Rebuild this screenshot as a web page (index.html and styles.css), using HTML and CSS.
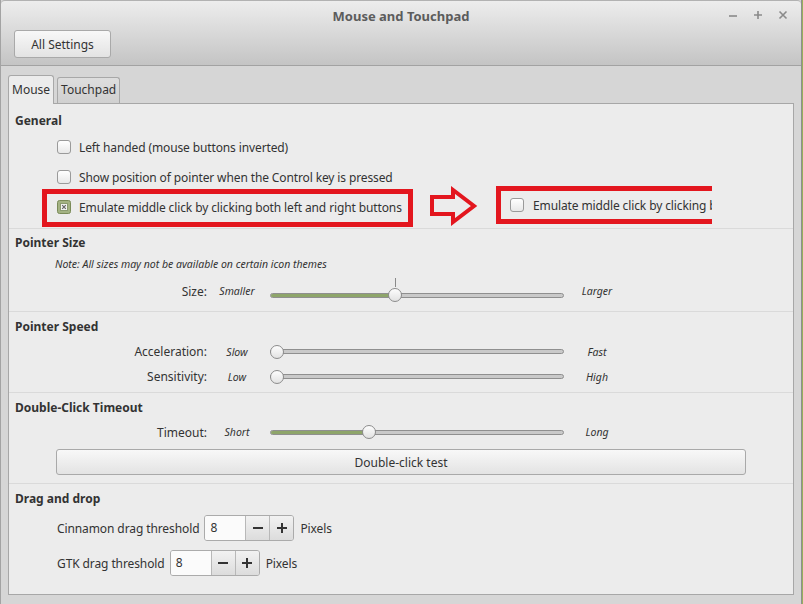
FILE: index.html
```html
<!DOCTYPE html>
<html>
<head>
    <title>Mouse and Touchpad</title>
    <link rel="stylesheet" href="styles.css">
</head>
<body>
    <div class="window">
        <!-- Header bar -->
        <div class="headerbar">
            <div class="titlebar">
                <span></span>
                <span class="title">Mouse and Touchpad</span>
                <div class="wm-buttons">
                    <svg width="10" height="10" viewBox="0 0 10 10"><path d="M1 6h8" stroke="#8a8a8a" stroke-width="1.6"/></svg>
                    <svg width="10" height="10" viewBox="0 0 10 10"><path d="M1 5h8M5 1v8" stroke="#8a8a8a" stroke-width="1.6"/></svg>
                    <svg width="10" height="10" viewBox="0 0 10 10"><path d="M1.5 1.5l7 7M8.5 1.5l-7 7" stroke="#8a8a8a" stroke-width="1.6"/></svg>
                </div>
            </div>
            <div class="toolbar">
                <button class="gtk-button all-settings">All Settings</button>
            </div>
        </div>

        <div class="content">
            <div class="tabs">
                <div class="tab active">Mouse</div>
                <div class="tab">Touchpad</div>
            </div>

            <div class="notebook">
                <!-- General -->
                <div class="group general">
                    <div class="group-title">General</div>
                    <div class="check-row"><span class="checkbox"></span>Left handed (mouse buttons inverted)</div>
                    <div class="check-row"><span class="checkbox"></span>Show position of pointer when the Control key is pressed</div>
                    <div class="check-row">
                        <svg class="checkbox-checked" width="14" height="14" viewBox="0 0 14 14">
                            <rect x="0.5" y="0.5" width="13" height="13" rx="2" fill="#a3b283" stroke="#7a8a58"/>
                            <rect x="3.5" y="3.5" width="7" height="7" fill="#f3f3f3" stroke="#8b9a70"/>
                            <path d="M5.2 5.2l3.6 3.6M8.8 5.2l-3.6 3.6" stroke="#666" stroke-width="1.2"/>
                        </svg>Emulate middle click by clicking both left and right buttons
                    </div>

                    <!-- annotations -->
                    <div class="mark-box"></div>
                    <svg class="mark-arrow" width="50" height="40" viewBox="0 0 50 40">
                        <polygon points="3,11 24,11 24,4 45,20 24,36 24,28 3,28" fill="#ececec" stroke="#e3161e" stroke-width="4"/>
                    </svg>
                    <div class="mark-crop">
                        <span class="checkbox"></span>Emulate middle click by clicking both left and right buttons
                    </div>
                </div>

                <!-- Pointer size -->
                <div class="group pointer-size">
                    <div class="group-title">Pointer Size</div>
                    <div class="note">Note: All sizes may not be available on certain icon themes</div>
                    <div class="slider-row size-row">
                        <span class="slider-label">Size:</span>
                        <span class="range-min">Smaller</span>
                        <div class="slider marked">
                            <div class="track-wrap">
                                <div class="track"><div class="fill" style="width: 125px"></div></div>
                                <div class="tick" style="left: 125px"></div>
                                <div class="knob" style="left: 118px"></div>
                            </div>
                        </div>
                        <span class="range-max">Larger</span>
                    </div>
                </div>

                <!-- Pointer speed -->
                <div class="group pointer-speed">
                    <div class="group-title">Pointer Speed</div>
                    <div class="slider-row speed-row">
                        <span class="slider-label">Acceleration:</span>
                        <span class="range-min">Slow</span>
                        <div class="slider">
                            <div class="track-wrap">
                                <div class="track"></div>
                                <div class="knob" style="left: 0px"></div>
                            </div>
                        </div>
                        <span class="range-max">Fast</span>
                    </div>
                    <div class="slider-row speed-row">
                        <span class="slider-label">Sensitivity:</span>
                        <span class="range-min">Low</span>
                        <div class="slider">
                            <div class="track-wrap">
                                <div class="track"></div>
                                <div class="knob" style="left: 0px"></div>
                            </div>
                        </div>
                        <span class="range-max">High</span>
                    </div>
                </div>

                <!-- Double click -->
                <div class="group double-click">
                    <div class="group-title">Double-Click Timeout</div>
                    <div class="slider-row timeout-row">
                        <span class="slider-label">Timeout:</span>
                        <span class="range-min">Short</span>
                        <div class="slider">
                            <div class="track-wrap">
                                <div class="track"><div class="fill" style="width: 99px"></div></div>
                                <div class="knob" style="left: 92px"></div>
                            </div>
                        </div>
                        <span class="range-max">Long</span>
                    </div>
                    <button class="gtk-button test-button">Double-click test</button>
                </div>

                <!-- Drag and drop -->
                <div class="group drag-drop">
                    <div class="group-title">Drag and drop</div>
                    <div class="spin-row">
                        <span>Cinnamon drag threshold</span>
                        <div class="spin">
                            <span class="spin-entry">8</span>
                            <span class="spin-btn"><svg width="10" height="10" viewBox="0 0 10 10"><path d="M0 5h10" stroke="#333" stroke-width="2"/></svg></span>
                            <span class="spin-btn"><svg width="10" height="10" viewBox="0 0 10 10"><path d="M0 5h10M5 0v10" stroke="#333" stroke-width="2"/></svg></span>
                        </div>
                        <span>Pixels</span>
                    </div>
                    <div class="spin-row second">
                        <span>GTK drag threshold</span>
                        <div class="spin">
                            <span class="spin-entry">8</span>
                            <span class="spin-btn"><svg width="10" height="10" viewBox="0 0 10 10"><path d="M0 5h10" stroke="#333" stroke-width="2"/></svg></span>
                            <span class="spin-btn"><svg width="10" height="10" viewBox="0 0 10 10"><path d="M0 5h10M5 0v10" stroke="#333" stroke-width="2"/></svg></span>
                        </div>
                        <span>Pixels</span>
                    </div>
                </div>
            </div>
        </div>
    </div>
</body>
</html>
```

FILE: styles.css
```css
* {
    box-sizing: border-box;
}
html, body {
    margin: 0;
    padding: 0;
}
body {
    width: 803px;
    height: 604px;
    overflow: hidden;
    background: #98b05c;
    font-family: "Noto Sans", "DejaVu Sans", sans-serif;
    font-size: 12px;
    color: #333;
}
.window {
    width: 802px;
    height: 604px;
    background: #d6d6d6;
    border-left: 1px solid #a3a3a3;
    border-right: 1px solid #8e8e8e;
    display: flex;
    flex-direction: column;
}

/* Header bar */
.headerbar {
    height: 66px;
    background: linear-gradient(#ededed, #c4c4c4);
    border-top: 1px solid #b2b2b2;
    border-bottom: 1px solid #a2a2a2;
    border-radius: 4px 4px 0 0;
}
.titlebar {
    height: 29px;
    display: grid;
    grid-template-columns: 1fr auto 1fr;
    align-items: center;
}
.title {
    font-size: 13px;
    font-weight: bold;
    color: #5c5c5c;
}
.wm-buttons {
    justify-self: end;
    display: flex;
    gap: 15px;
    padding-right: 13px;
    padding-bottom: 2px;
}
.wm-buttons svg {
    display: block;
}
.toolbar {
    padding-left: 13px;
}
.gtk-button {
    font-family: inherit;
    font-size: 12px;
    color: #333;
    background: linear-gradient(#f8f8f8, #e3e3e3);
    border: 1px solid #a9a9a9;
    border-radius: 3px;
    padding: 0;
}
.all-settings {
    width: 97px;
    height: 28px;
}

/* Notebook */
.content {
    flex: 1;
    padding-top: 9px;
}
.tabs {
    display: flex;
    align-items: flex-end;
    gap: 3px;
    height: 28px;
    padding-left: 7px;
}
.tab {
    height: 26px;
    padding: 0 3px;
    line-height: 24px;
    border: 1px solid #a8a8a8;
    border-bottom: none;
    border-radius: 3px 3px 0 0;
    background: linear-gradient(#dedede, #d0d0d0);
}
.tab.active {
    height: 29px;
    line-height: 27px;
    margin-bottom: -1px;
    background: #ececec;
    position: relative;
    z-index: 1;
}
.notebook {
    margin: 0 7px 0 7px;
    height: 492px;
    background: #ececec;
    border: 1px solid #a7a7a7;
}
.group {
    padding: 6px 0 0 6px;
    border-bottom: 1px solid #dadada;
}
.group-title {
    font-weight: bold;
    line-height: 18px;
}

/* General */
.general {
    height: 125px;
    padding-top: 8px;
    position: relative;
}
.general .group-title {
    margin-bottom: 2px;
}
.check-row {
    height: 30px;
    display: flex;
    align-items: center;
    padding-left: 42px;
    letter-spacing: -0.12px;
}
.checkbox {
    width: 14px;
    height: 14px;
    margin-right: 8px;
    border: 1px solid #9a9a9a;
    border-radius: 3px;
    background: linear-gradient(#ffffff, #e8e8e8);
    flex-shrink: 0;
}
.checkbox-checked {
    margin-right: 8px;
    flex-shrink: 0;
}
.mark-box {
    position: absolute;
    left: 33px;
    top: 85px;
    width: 371px;
    height: 38px;
    border: 5px solid #e3161e;
}
.mark-arrow {
    position: absolute;
    left: 420px;
    top: 82px;
}
.mark-crop {
    position: absolute;
    left: 487px;
    top: 82px;
    width: 216px;
    height: 38px;
    border: 5px solid #e3161e;
    border-right: none;
    padding-left: 9px;
    display: flex;
    align-items: center;
    white-space: nowrap;
    overflow: hidden;
    letter-spacing: -0.12px;
}
.mark-crop .checkbox {
    margin-right: 9px;
}

/* Sliders */
.pointer-size {
    height: 83px;
    padding-top: 5px;
}
.note {
    margin-top: 5px;
    padding-left: 40px;
    font-size: 10.5px;
    font-style: italic;
    line-height: 14px;
}
.slider-row {
    display: grid;
    grid-template-columns: 202px 53px 307px 40px;
    align-items: center;
    height: 20px;
}
.size-row {
    margin-top: 10px;
}
.slider-label {
    text-align: right;
    padding-right: 10px;
}
.range-min,
.range-max {
    font-size: 10.5px;
    font-style: italic;
    text-align: center;
}
.range-min {
    padding-right: 13px;
}
.slider {
    width: 294px;
    height: 20px;
    display: flex;
    align-items: center;
}
.slider.marked {
    padding-top: 8px;
}
.track-wrap {
    position: relative;
    width: 294px;
    height: 14px;
    display: flex;
    align-items: center;
}
.track {
    width: 294px;
    height: 5px;
    border: 1px solid #8f8f8f;
    border-radius: 3px;
    background: #c9c9c9;
    overflow: hidden;
}
.fill {
    height: 100%;
    background: #8ea56a;
}
.knob {
    position: absolute;
    top: 0;
    width: 14px;
    height: 14px;
    border: 1px solid #8c8c8c;
    border-radius: 50%;
    background: linear-gradient(#fdfdfd, #e2e2e2);
}
.tick {
    position: absolute;
    top: -10px;
    width: 1px;
    height: 9px;
    background: #8a8a8a;
}
.pointer-speed {
    height: 81px;
}
.pointer-speed .group-title {
    margin-bottom: 3px;
}
.speed-row {
    height: 25px;
}

/* Double click */
.double-click {
    height: 91px;
}
.timeout-row {
    margin-top: 5px;
}
.test-button {
    display: block;
    margin: 7px 0 0 41px;
    width: 690px;
    height: 26px;
}

/* Drag and drop */
.drag-drop {
    border-bottom: none;
}
.spin-row {
    display: flex;
    align-items: center;
    gap: 5px;
    margin-top: 7px;
    padding-left: 42px;
    height: 26px;
    letter-spacing: -0.1px;
}
.spin-row.second {
    margin-top: 9px;
}
.spin {
    display: flex;
    height: 26px;
    border: 1px solid #ababab;
    border-radius: 3px;
    overflow: hidden;
    margin-right: 1px;
}
.spin-entry {
    width: 40px;
    padding-left: 5px;
    line-height: 24px;
    background: #fbfbfb;
}
.spin-btn {
    width: 24px;
    display: flex;
    align-items: center;
    justify-content: center;
    border-left: 1px solid #b8b8b8;
    background: linear-gradient(#f2f2f2, #dcdcdc);
}
```
